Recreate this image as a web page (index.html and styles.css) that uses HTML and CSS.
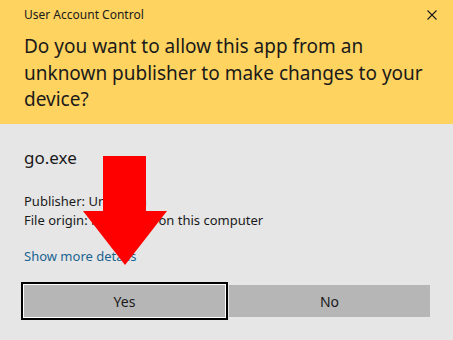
FILE: index.html
```html
<!DOCTYPE html>
<html lang="en">
<head>
    <meta charset="UTF-8">
    <meta name="viewport" content="width=device-width, initial-scale=1.0">
    <title>User Account Control</title>
    <link rel="stylesheet" href="styles.css">
</head>
<body>
    <header class="prompt-header">
        <div class="title-row">
            <span class="title">User Account Control</span>
            <span class="close">
                <svg width="10" height="10" viewBox="0 0 10 10">
                    <path d="M0.5 0.5 L9.5 9.5 M9.5 0.5 L0.5 9.5" stroke="#1a1a1a" stroke-width="1.1" fill="none"/>
                </svg>
            </span>
        </div>
        <h1 class="question">Do you want to allow this app from an unknown publisher to make changes to your device?</h1>
    </header>

    <main class="prompt-body">
        <p class="filename">go.exe</p>
        <div class="details">
            <p>Publisher: Unknown</p>
            <p>File origin: Hard drive on this computer</p>
        </div>
        <a class="more-link">Show more details</a>
        <div class="button-row">
            <button class="btn btn-focus">Yes</button>
            <button class="btn">No</button>
        </div>

        <!-- red arrow drawn over the dialog -->
        <svg class="arrow" width="453" height="340" viewBox="0 0 453 340">
            <polygon points="103,156 146,156 146,211 167,211 125,265 83,211 103,211" fill="#ff0000"/>
        </svg>
    </main>
</body>
</html>
```

FILE: styles.css
```css
body {
    font-family: "Segoe UI", "Noto Sans", Arial, sans-serif;
    margin: 0;
    padding: 0;
    width: 453px;
    height: 340px;
    background-color: #e6e6e6;
    color: #000;
    overflow: hidden;
}

p {
    margin: 0;
}

.prompt-header {
    background-color: #fed35f;
    height: 124px;
    box-sizing: border-box;
    padding: 0 16px 0 24px;
}

.title-row {
    display: flex;
    justify-content: space-between;
    align-items: center;
    height: 16px;
    padding-top: 7px;
}

.title {
    font-size: 12px;
    line-height: 16px;
    color: #1a1a1a;
}

.close {
    display: flex;
    width: 10px;
    height: 10px;
}

.question {
    margin: 10px -8px 0 0;
    font-size: 19px;
    font-weight: normal;
    line-height: 26.5px;
    color: #1a1a1a;
}

.prompt-body {
    padding: 22px 23px 0 24px;
}

.filename {
    font-size: 17px;
    line-height: 24px;
    color: #1a1a1a;
}

.details {
    margin-top: 22px;
    font-size: 13px;
    line-height: 19px;
    color: #1a1a1a;
}

.more-link {
    display: block;
    margin-top: 17px;
    font-size: 13px;
    line-height: 19px;
    color: #1a6491;
}

.button-row {
    display: flex;
    gap: 4px;
    margin-top: 19px;
}

.btn {
    flex: 1;
    height: 32px;
    border: none;
    background-color: #b6b6b6;
    font-family: inherit;
    font-size: 14px;
    color: #1a1a1a;
}

.btn-focus {
    box-shadow: 0 0 0 1px #ffffff, 0 0 0 3px #000000;
}

.arrow {
    position: absolute;
    left: 0;
    top: 0;
    pointer-events: none;
}
```
